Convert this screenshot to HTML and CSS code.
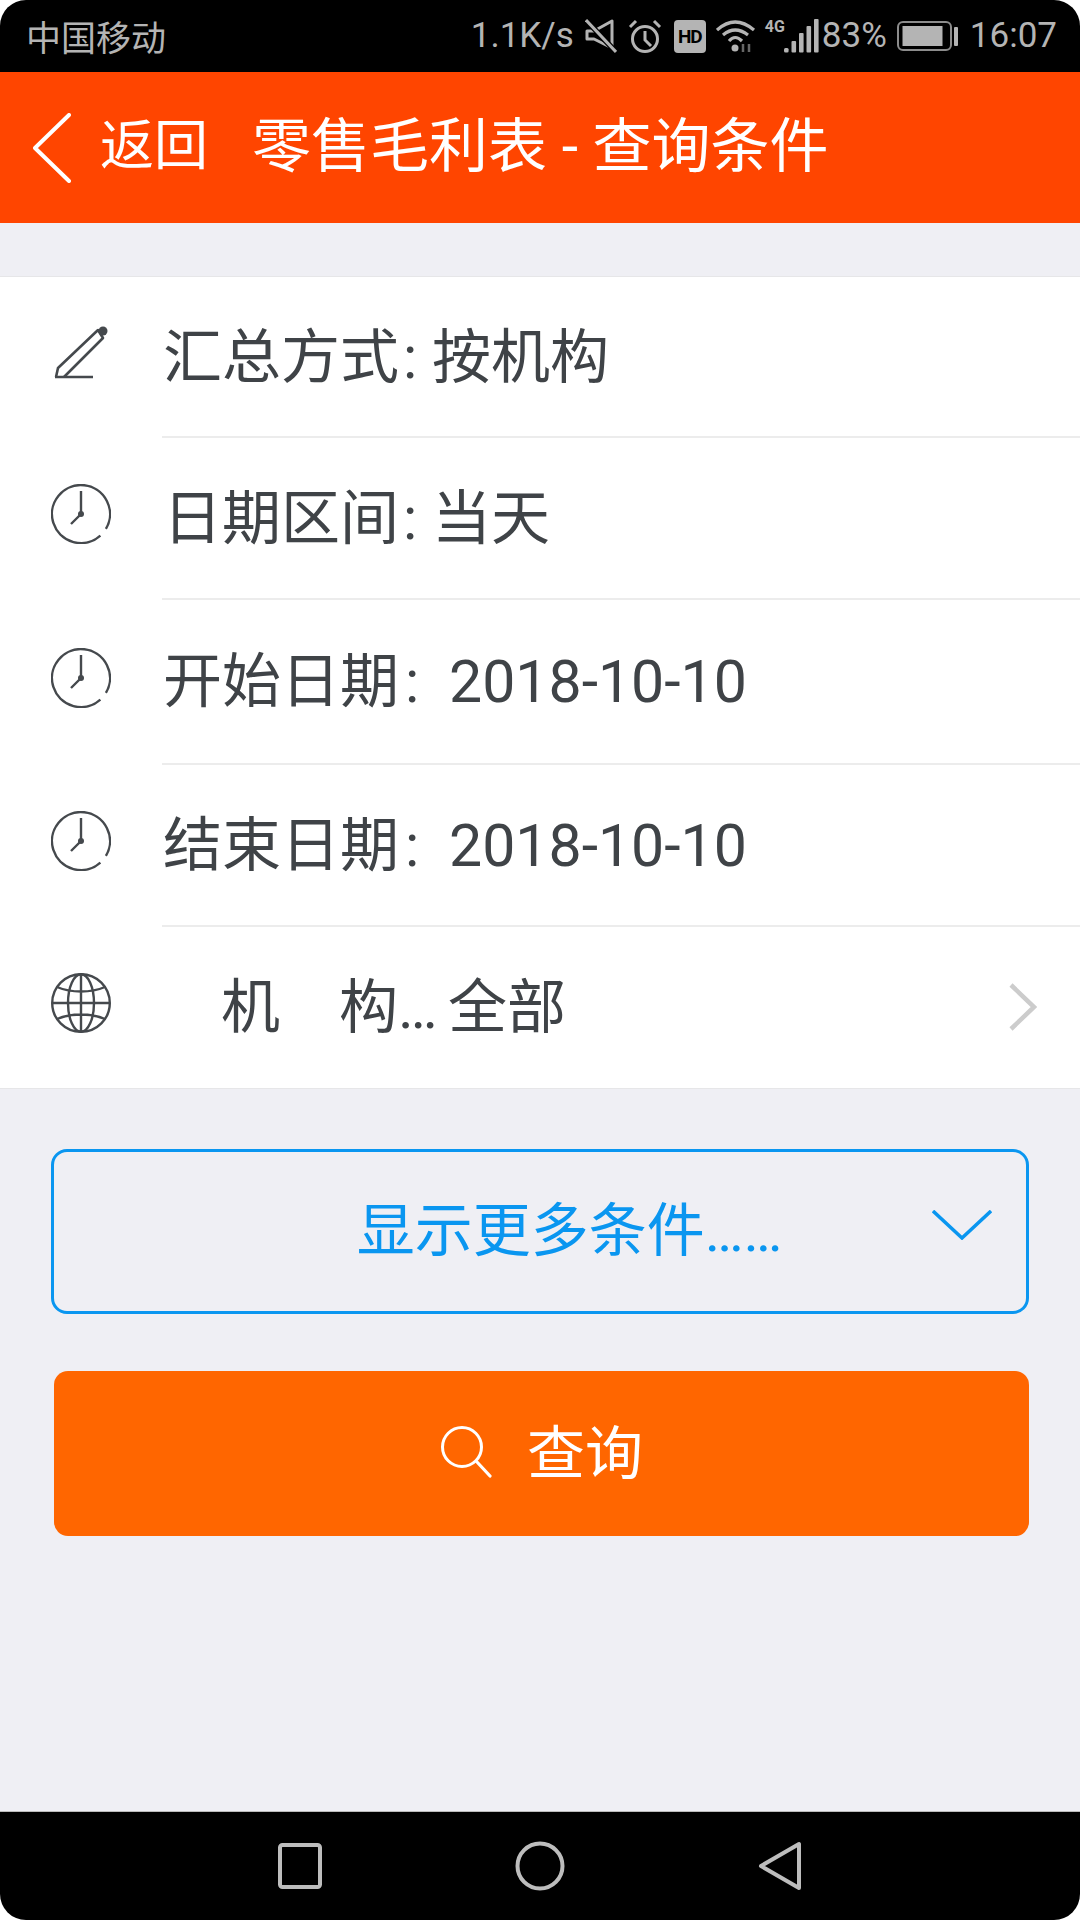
FILE: index.html
```html
<!DOCTYPE html>
<html lang="zh-CN">
<head>
    <meta charset="UTF-8">
    <title>零售毛利表 - 查询条件</title>
    <link rel="stylesheet" href="styles.css">
</head>
<body>
  <div class="phone">

    <div class="status-bar">
      <span class="carrier">中国移动</span>
      <span class="speed">1.1K/s</span>
      <svg class="st-icon mute" width="32" height="34" viewBox="0 0 32 34"><path d="M2 12h7L27 2v27L9 20H2z" fill="none" stroke="#b4b4b4" stroke-width="3" stroke-linejoin="round"/><path d="M1 1l30 32" stroke="#000" stroke-width="5.500"/><path d="M1 1l30 32" stroke="#b4b4b4" stroke-width="3"/></svg>
      <svg class="st-icon alarm" width="34" height="34" viewBox="0 0 34 34"><circle cx="17" cy="20" r="12.500" fill="none" stroke="#b4b4b4" stroke-width="3"/><path d="M17 12v9l6 6M2 8l6-6M32 8l-6-6" fill="none" stroke="#b4b4b4" stroke-width="3"/></svg>
      <span class="hd">HD</span>
      <svg class="st-icon wifi" width="40" height="34" viewBox="0 0 40 34"><path d="M1 11Q19-5 38 11M7 16Q19 6 32 16M13 22Q19 15 26 22" fill="none" stroke="#b4b4b4" stroke-width="3.200"/><circle cx="19" cy="29" r="3.500" fill="#b4b4b4"/><path d="M27 25v8M33 25v8" stroke="#666" stroke-width="2.500"/></svg>
      <span class="net">4G</span>
      <svg class="st-icon signal" width="35" height="34" viewBox="0 0 35 34"><rect x="0" y="29" width="4.600" height="4.500" rx="1.500" fill="#b4b4b4"/><rect x="7.500" y="22" width="4.600" height="11.500" rx="1" fill="#b4b4b4"/><rect x="15" y="14" width="4.600" height="19.500" rx="1" fill="#b4b4b4"/><rect x="22.500" y="7" width="4.600" height="26.500" rx="1" fill="#b4b4b4"/><rect x="30" y="0" width="4.600" height="33.500" rx="1" fill="#b4b4b4"/></svg>
      <span class="pct">83%</span>
      <svg class="st-icon battery" width="61" height="30" viewBox="0 0 61 30"><rect x="1" y="1" width="53" height="28" rx="5" fill="none" stroke="#8c8c8c" stroke-width="2"/><rect x="5.500" y="5" width="40" height="20" fill="#b4b4b4"/><rect x="57" y="6" width="4" height="19" rx="1" fill="#b4b4b4"/></svg>
      <span class="clock-text">16:07</span>
    </div>

    <header class="top-bar">
      <svg class="back" width="38" height="70" viewBox="0 0 38 70"><path d="M36 2L2 35l34 33" fill="none" stroke="#fff" stroke-width="4" stroke-linecap="round" stroke-linejoin="round"/></svg>
      <span class="back-text">返回</span>
      <span class="title">零售毛利表 - 查询条件</span>
    </header>

    <main class="content">
      <section class="list">
        <div class="row row-a">
          <svg class="icon" width="60" height="60" viewBox="0 0 60 60"><path d="M13 54L52 15 47 7 7 45 5 54" fill="none" stroke="#45494d" stroke-width="2.600" stroke-linejoin="round"/><circle cx="52" cy="8" r="4.500" fill="#45494d"/><path d="M4 54h38" stroke="#45494d" stroke-width="2.600"/></svg>
          <span class="text">汇总方式<span class="colon">:</span>按机构</span>
        </div>
        <div class="row row-b">
          <svg class="icon" width="60" height="60" viewBox="0 0 60 60"><path d="M54.900 44.900A29 29 0 1 0 49.400 51.600" fill="none" stroke="#45494d" stroke-width="2.400"/><path d="M30 7v23l-10 10" fill="none" stroke="#45494d" stroke-width="2.400"/><circle cx="30" cy="30" r="3" fill="#45494d"/></svg>
          <span class="text">日期区间<span class="colon">:</span>当天</span>
        </div>
        <div class="row row-c">
          <svg class="icon" width="60" height="60" viewBox="0 0 60 60"><path d="M54.900 44.900A29 29 0 1 0 49.400 51.600" fill="none" stroke="#45494d" stroke-width="2.400"/><path d="M30 7v23l-10 10" fill="none" stroke="#45494d" stroke-width="2.400"/><circle cx="30" cy="30" r="3" fill="#45494d"/></svg>
          <span class="text">开始日期<span class="sep">:</span>2018-10-10</span>
        </div>
        <div class="row row-b">
          <svg class="icon" width="60" height="60" viewBox="0 0 60 60"><path d="M54.900 44.900A29 29 0 1 0 49.400 51.600" fill="none" stroke="#45494d" stroke-width="2.400"/><path d="M30 7v23l-10 10" fill="none" stroke="#45494d" stroke-width="2.400"/><circle cx="30" cy="30" r="3" fill="#45494d"/></svg>
          <span class="text">结束日期<span class="sep">:</span>2018-10-10</span>
        </div>
        <div class="row row-b">
          <svg class="icon" width="60" height="60" viewBox="0 0 60 60"><g fill="none" stroke="#45494d" stroke-width="2.400"><circle cx="30" cy="30" r="28.800"/><ellipse cx="30" cy="30" rx="13" ry="28.800"/><path d="M30 1v58M1 30h58M6 14c14 6 34 6 48 0M6 46c14-6 34-6 48 0"/></g></svg>
          <span class="text"><span class="org-label">机　构…</span>全部</span>
          <svg class="arrow" width="28" height="48" viewBox="0 0 28 48"><path d="M2 2l23 22L2 46" fill="none" stroke="#ccc" stroke-width="4.500"/></svg>
        </div>
      </section>

      <div class="more-btn">
        <span class="more-text">显示更多条件……</span>
        <svg class="more-arrow" width="60" height="30" viewBox="0 0 60 30"><path d="M1 1l29 27L59 1" fill="none" stroke="#0a96f0" stroke-width="3.500"/></svg>
      </div>

      <div class="search-btn">
        <svg class="search-icon" width="52" height="52" viewBox="0 0 52 52"><circle cx="22" cy="21" r="19.500" fill="none" stroke="#fff" stroke-width="3"/><path d="M37 36l13 14" stroke="#fff" stroke-width="3.200" stroke-linecap="round"/></svg>
        <span class="search-text">查询</span>
      </div>
    </main>

    <nav class="nav-bar">
      <svg width="44" height="46" viewBox="0 0 44 46"><rect x="2" y="2" width="40" height="42" rx="2.500" fill="none" stroke="#bdbdbd" stroke-width="4"/></svg>
      <svg width="50" height="50" viewBox="0 0 50 50"><circle cx="25" cy="25" r="22.500" fill="none" stroke="#bdbdbd" stroke-width="4"/></svg>
      <svg width="44" height="50" viewBox="0 0 44 50"><path d="M41 3v44L3 25z" fill="none" stroke="#bdbdbd" stroke-width="4" stroke-linejoin="round"/></svg>
    </nav>

  </div>
</body>
</html>
```

FILE: styles.css
```css
* {
box-sizing: border-box;
}

body {
margin: 0;
background-color: #fff;
font-family: Roboto, 'Noto Sans CJK SC', sans-serif;
}

.phone {
display: flex;
flex-direction: column;
width: 1080px;
height: 1920px;
overflow: hidden;
border-radius: 26px;
}

.status-bar {
display: flex;
align-items: center;
flex: 0 0 72px;
padding-left: 26px;
background-color: #000;
color: #b4b4b4;
font-size: 35px;
}

.status-bar span {
margin-bottom: 2px;
}

.carrier {
margin-right: auto;
}

.speed {
margin-right: 11px;
}

.st-icon {
flex: none;
}

.alarm {
margin-left: 11px;
}

.status-bar .hd {
width: 32px;
height: 33px;
margin-left: 12px;
margin-bottom: 0;
background-color: #b4b4b4;
border-radius: 4px;
color: #000;
font-size: 19px;
font-weight: 700;
letter-spacing: -1px;
line-height: 33px;
text-align: center;
}

.wifi {
margin-left: 10px;
}

.status-bar .net {
align-self: flex-start;
width: 19px;
margin: 19px 0 0 9px;
font-size: 16px;
font-weight: 700;
line-height: 15px;
}

.status-bar .pct {
margin-left: 3px;
}

.battery {
margin-left: 10px;
}

.status-bar .clock-text {
margin-left: 12px;
margin-right: 23px;
}

.top-bar {
display: flex;
align-items: center;
flex: 0 0 151px;
padding-left: 33px;
background-color: #ff4500;
color: #fff;
}

.back-text {
margin-left: 29px;
margin-bottom: 12px;
font-size: 54px;
}

.title {
margin-left: 44px;
margin-bottom: 12px;
font-size: 59px;
}

.content {
flex: 1;
padding-top: 53px;
background-color: #efeff4;
}

.list {
background-color: #fff;
border-top: 1px solid #e6e6e8;
border-bottom: 1px solid #e6e6e8;
}

.row {
position: relative;
display: flex;
align-items: center;
padding-left: 51px;
color: #3f4347;
font-size: 59px;
}

.row + .row::before {
content: "";
position: absolute;
top: -1px;
left: 162px;
right: 0;
border-top: 2px solid #ececec;
}

.row-a {
height: 160px;
}

.row-b {
height: 162px;
}

.row-c {
height: 165px;
}

.icon {
flex: none;
margin-right: 52px;
margin-bottom: 8px;
}

.text {
margin-bottom: 10px;
}

.colon {
display: inline-block;
width: 33px;
padding-left: 4px;
}

.sep {
display: inline-block;
width: 50px;
padding-left: 6px;
}

.org-label {
display: inline-block;
width: 285px;
padding-left: 58px;
}

.arrow {
margin-left: auto;
margin-right: 43px;
}

.more-btn {
position: relative;
display: flex;
align-items: center;
justify-content: center;
height: 165px;
margin: 60px 51px 0;
padding-left: 59px;
border: 3px solid #0a96f0;
border-radius: 16px;
color: #0a96f0;
font-size: 58px;
}

.more-text {
margin-bottom: 12px;
}

.more-arrow {
position: absolute;
top: 58px;
right: 34px;
}

.search-btn {
display: flex;
align-items: center;
justify-content: center;
gap: 35px;
height: 165px;
margin: 57px 51px 0 54px;
background-color: #ff6600;
border-radius: 14px;
color: #fff;
font-size: 58px;
}

.search-icon {
margin-bottom: 4px;
}

.search-text {
margin-bottom: 10px;
}

.nav-bar {
display: flex;
align-items: center;
flex: 0 0 109px;
gap: 193px;
padding-left: 278px;
background-color: #000;
border-top: 1px solid #bbb;
}
```
